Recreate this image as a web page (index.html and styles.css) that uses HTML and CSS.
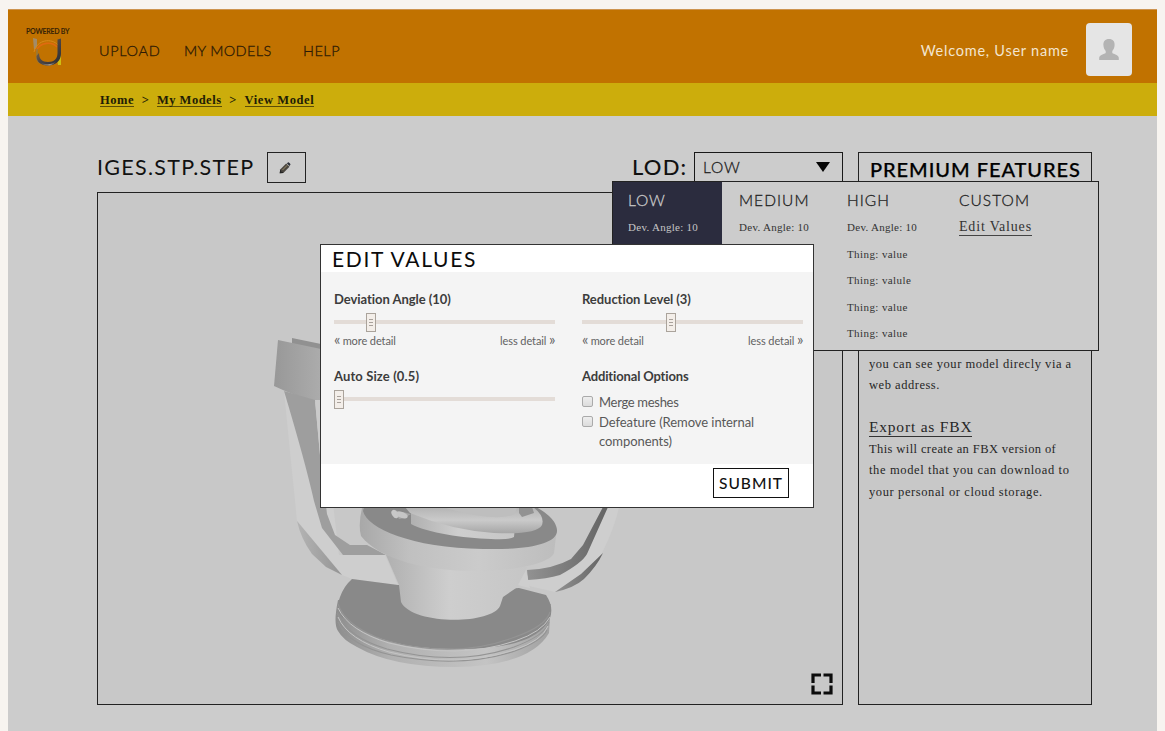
FILE: index.html
```html
<!DOCTYPE html>
<html lang="en">
<head>
<meta charset="utf-8">
<title>View Model</title>
<link rel="stylesheet" href="styles.css">
</head>
<body>
<div class="page">
  <header class="header">
    <div class="brand">
      <span class="brand-label">POWERED BY</span>
      <svg class="brand-logo" width="30" height="29" viewBox="0 0 30 29">
        <defs>
          <linearGradient id="steel" x1="0" y1="0" x2="1" y2="1"><stop offset="0" stop-color="#94734b"/><stop offset=".5" stop-color="#4c4545"/><stop offset="1" stop-color="#292b30"/></linearGradient>
          <linearGradient id="sweep" x1="0" y1="0" x2="1" y2="0"><stop offset="0" stop-color="#35353a"/><stop offset=".6" stop-color="#a09a92"/><stop offset="1" stop-color="#29292b"/></linearGradient>
        </defs>
        <path d="M0 0l4 1v8L1 12z" fill="#a28b69"/>
        <path d="M1 14C4 1 19 0 25 7" fill="none" stroke="#d98a1c" stroke-width="1"/>
        <path d="M3 13C7 4 19 3 24 9" fill="none" stroke="#e06a10" stroke-width="1.600"/>
        <path d="M24 22l4-5v10h-3z" fill="#cfbd12"/>
        <path d="M4 11v10q1 3 3 4" fill="none" stroke="#96793a" stroke-width="1.500"/>
        <path d="M24.500 1.500L28 .5v15c0 8-6 12-13 12S3.500 24 3.500 18L6 15c0 6 3 9 9 9s9.500-3 9.500-9z" fill="url(#steel)"/>
        <path d="M6 23c4 4.500 14 4.500 18-1-2 4-5 5.500-9 5.500S8 26 6 23z" fill="url(#sweep)"/>
      </svg>
    </div>
    <nav class="nav">
      <a class="nav-upload">UPLOAD</a><a class="nav-models">MY MODELS</a><a class="nav-help">HELP</a>
    </nav>
    <span class="welcome">Welcome, User name</span>
    <div class="avatar">
      <svg width="20" height="21" viewBox="0 0 20 21"><path d="M10 0c4 0 5.800 2.500 5.600 6.100-.1 2.500-1 4.600-2.300 5.800v2c1.500 1.100 6.300 1.800 6.500 4.800V21H.2v-2.300c.2-3 5-3.700 6.500-4.800v-2c-1.300-1.200-2.200-3.300-2.300-5.800C4.200 2.500 6 0 10 0z" fill="#b3b3b3"/></svg>
    </div>
  </header>
  <nav class="crumbs">
    <a>Home</a><span class="sep">&gt;</span><a class="c-models">My Models</a><span class="sep">&gt;</span><a class="c-view">View Model</a>
  </nav>
  <main class="main">
    <section class="model">
      <div class="model-head">
        <h1 class="model-name">IGES.STP.STEP</h1>
        <button class="edit" aria-label="Rename">
          <svg width="12" height="12" viewBox="0 0 12 12"><path d="M1.200 7.500L7.200 1.500l3.300 3.300L4.300 11 .7 11.300z" fill="#4b4740"/><path d="M7.800 1.200L9 .4c.6-.4 2.800 1.600 2.400 2.400l-.9 1.200z" fill="#2c2f38"/><path d="M3.500 8l4.800-4.800" stroke="#9a8b68" stroke-width="1"/><path d="M1.200 7.500l.8.9.3 1.300 1.600.4.400.9-3.600.3z" fill="#252525"/></svg>
        </button>
        <span class="lod-label">LOD:</span>
        <div class="lod-select"><span>LOW</span><svg width="14" height="10" viewBox="0 0 14 10"><path d="M0 0h14L7 10z" fill="#050505"/></svg></div>
      </div>
      <div class="viewer">
        <svg class="scene" viewBox="98 193 744 511">
          <defs>
            <linearGradient id="cone" x1="0" x2="1"><stop offset="0" stop-color="#b0b0b0"/><stop offset=".45" stop-color="#cecece"/><stop offset="1" stop-color="#c6c6c6"/></linearGradient>
            <linearGradient id="rim" x1="0" x2="1"><stop offset="0" stop-color="#a8a8a8"/><stop offset=".25" stop-color="#c0c0c0"/><stop offset=".6" stop-color="#cbcbcb"/><stop offset="1" stop-color="#bdbdbd"/></linearGradient>
            <linearGradient id="disc" x1="0" x2="1"><stop offset="0" stop-color="#8d8d8d"/><stop offset=".25" stop-color="#b0b0b0"/><stop offset=".7" stop-color="#c4c4c4"/><stop offset="1" stop-color="#a0a0a0"/></linearGradient>
            <linearGradient id="tube" x1="0" y1="0" x2="0" y2="1"><stop offset="0" stop-color="#b4b4b4"/><stop offset=".5" stop-color="#cacaca"/><stop offset="1" stop-color="#a6a6a6"/></linearGradient>
            <linearGradient id="block" x1="0" x2="1"><stop offset="0" stop-color="#989898"/><stop offset="1" stop-color="#acacac"/></linearGradient>
            <linearGradient id="shade" x1="0" x2="1"><stop offset="0" stop-color="#b4b4b4"/><stop offset="1" stop-color="#949494"/></linearGradient>
            <linearGradient id="dark" x1="0" x2="1"><stop offset="0" stop-color="#929292"/><stop offset="1" stop-color="#646464"/></linearGradient>
          </defs>
          <path d="M284 391l13 130 45 54 10 4 46 6-13-30h-46l-18-155z" fill="#cecece"/>
          <path d="M292 338l29 6v8h-29z" fill="#919191"/>
          <path d="M278 340l43 9v55q-28-9-47-18z" fill="url(#block)"/>
          <path d="M284 391l31 9 6 66 6 48 8 21 15 10h17l19 10h-43l-21-27-8-27q-9-40-30-110z" fill="#9e9e9e"/>
          <path d="M315 400h6v66z" fill="#cacaca"/>
          <path d="M297 521l45 54-16-8-14-13q-11-15-15-33z" fill="url(#shade)"/>
          <path d="M607 507l-22 47-19 14-38 5-3 12 30 7q35-17 47-39 13-26 17-46z" fill="#cecece"/>
          <path d="M603 507h5l-21 47q-5 9-27 21-13 4-32 5l-1-10q26-1 44-11l12-14z" fill="url(#dark)"/>
          <path d="M603 553q-6 13-19 26-10 9-29 13l26-18z" fill="url(#dark)"/>
          <path d="M338 600q-5 24 0 31 5 9 19 16 35 20 98 20 75-1 94-34l2-29z" fill="url(#disc)"/>
          <path d="M352 579l46 6 105 4 16-1 27 7q8 12 4 23-14 32-95 31-76 0-113-32-7-8-2-20 4-11 12-18z" fill="#898989"/>
          <path d="M338 604q7 22 46 36 71 20 131-3 31-11 35-25M337 613q10 24 50 36 69 18 127-2 32-12 35-25M338 622q10 23 53 33 69 14 124-4 27-10 32-21" fill="none" stroke="#949494" stroke-width="1.100"/>
          <path d="M338 608q11 23 51 35 69 17 126-2 27-9 35-24M338 617q10 23 51 35 68 17 125-2 28-9 34-24" fill="none" stroke="#c5c5c5" stroke-width="1"/>
          <path d="M386 555l141 12-5 17-19 13-3 9c-9 19-88 19-99-4l-2-17z" fill="url(#cone)"/>
          <path d="M526 570l4 18-12-3z" fill="#cecece"/>
          <path d="M362 508q-4 17-1 28c18 23 64 35 114 35 42 0 75-8 79-18l3-25z" fill="url(#rim)"/>
          <path d="M364 507h172q20 11 21 23c1 14-30 20-74 19-72-1-116-21-120-38z" fill="#898989"/>
          <path d="M411 507h106l-3 30q-4 3-23 2c-28-1-63-6-80-15z" fill="url(#cone)"/>
          <path d="M405 507h128q12 9 9 18-5 10-48 8-43-3-84-20z" fill="url(#tube)"/>
          <path d="M442 507h75l-2 7q-18 9-73-7z" fill="#bebebe"/>
          <path d="M519 507h13l2 6-12 4-3-4z" fill="#929292"/>
          <path d="M394 510q13 3 17 4l-7 4-5 1z" fill="#a6a6a6"/>
          <ellipse cx="395" cy="514" rx="3" ry="4.500" transform="rotate(-35 395 514)" fill="#c8c8c8"/>
          <ellipse cx="402" cy="515" rx="6" ry="3" transform="rotate(20 402 515)" fill="#c6c6c6"/>
        </svg>
        <svg class="expand" width="22" height="22" viewBox="0 0 22 22"><path d="M10 2H2V10M12.500 2H20V10M10 20H2V12.500M12.500 20H20V12.500" fill="none" stroke="#0c0c0c" stroke-width="3.200"/></svg>
      </div>
    </section>
    <aside class="premium">
      <h2>PREMIUM FEATURES</h2>
      <div class="premium-body">
        <p>you can see your model direcly via a<br>web address.</p>
        <a class="export">Export as FBX</a>
        <p class="desc"><span class="d1">This will create an FBX version of</span><br><span class="d2">the model that you can download to</span><br><span class="d3">your personal or cloud storage.</span></p>
      </div>
    </aside>
  </main>

  <div class="lod-menu">
    <div class="lod-col active"><h3>LOW</h3><p>Dev. Angle: 10</p></div>
    <div class="lod-col"><h3>MEDIUM</h3><p>Dev. Angle: 10</p></div>
    <div class="lod-col high"><h3>HIGH</h3><p>Dev. Angle: 10</p><p>Thing: value</p><p>Thing: valule</p><p>Thing: value</p><p>Thing: value</p></div>
    <div class="lod-col custom"><h3>CUSTOM</h3><a>Edit Values</a></div>
  </div>

  <div class="modal">
    <h2 class="modal-title">EDIT VALUES</h2>
    <div class="modal-body">
      <div class="field">
        <label>Deviation Angle (10)</label>
        <div class="slider"><span class="knob" style="left:32px"></span></div>
        <div class="range"><span><b>«</b> more detail</span><span>less detail <b>»</b></span></div>
      </div>
      <div class="field">
        <label>Reduction Level (3)</label>
        <div class="slider"><span class="knob" style="left:84px"></span></div>
        <div class="range"><span><b>«</b> more detail</span><span>less detail <b>»</b></span></div>
      </div>
      <div class="field">
        <label class="auto">Auto Size (0.5)</label>
        <div class="slider"><span class="knob" style="left:0"></span></div>
      </div>
      <div class="field options">
        <label class="additional">Additional Options</label>
        <div class="option first"><i class="box"></i><span>Merge meshes</span></div>
        <div class="option"><i class="box"></i><span>Defeature (Remove internal<br>components)</span></div>
      </div>
    </div>
    <div class="modal-foot"><button class="submit">SUBMIT</button></div>
  </div>
</div>
</body>
</html>
```
FILE: styles.css
```css
* { box-sizing: border-box; }
body { margin: 0; background: #f7f4f0; font-family: Lato, "Open Sans", sans-serif; color: #111; }
h1, h2, h3, p { margin: 0; font-weight: 400; }
button { padding: 0; background: none; font-family: inherit; color: inherit; }
.page { position: relative; width: 1149px; height: 722px; margin: 9px 8px 0; background: #ccc; overflow: hidden; }

.header { display: flex; align-items: center; height: 74px; padding: 0 25px 0 17px; background: #c17200; border-top: 1px solid #cd9450; }
.brand { display: flex; flex-direction: column; width: 74px; align-self: flex-start; padding-top: 17px; }
.brand-label { font: 700 7px/9px Lato, sans-serif; letter-spacing: -.25px; color: #382306; padding-left: 1px; white-space: nowrap; }
.brand-logo { margin: 2px 0 0 8px; }
.nav { display: flex; font-size: 14.500px; font-weight: 300; line-height: 20px; color: #2c1a05; padding-top: 8px; -webkit-text-stroke: .3px #2c1a05; }
.nav a { white-space: nowrap; }
.nav-upload { width: 85px; letter-spacing: .65px; }
.nav-models { width: 119px; letter-spacing: .35px; }
.nav-help { letter-spacing: .5px; }
.welcome { margin-left: auto; padding-top: 8px; margin-right: 17px; color: #f3e5cf; font-size: 14.500px; line-height: 20px; letter-spacing: .76px; }
.avatar { display: flex; align-items: center; justify-content: center; width: 46px; height: 53px; margin-top: 6px; border-radius: 4px; background: #e5e5e5; }

.crumbs { display: flex; height: 33px; padding: 9px 0 0 92px; background: #ccad0c; font: 700 12.500px/16px "Liberation Serif", serif; letter-spacing: .5px; color: #211c05; }
.crumbs a { height: 15px; border-bottom: 1px solid #5a4c08; white-space: nowrap; }
.crumbs .c-view { letter-spacing: .6px; }
.crumbs .sep { width: 23px; text-align: center; }

.main { display: flex; gap: 15px; padding: 36px 0 0 89px; }
.model { width: 746px; }
.model-head { display: flex; height: 40px; align-items: flex-start; }
.model-name { width: 170px; font-size: 21.500px; line-height: 31px; letter-spacing: 1.280px; white-space: nowrap; }
.edit { display: flex; align-items: center; justify-content: center; width: 39px; height: 31px; border: 1px solid #222; padding-right: 4px; }
.lod-label { margin-left: auto; width: 62px; font-size: 22px; line-height: 30px; letter-spacing: 1.200px; font-weight: 500; }
.lod-select { display: flex; align-items: center; justify-content: space-between; width: 149px; height: 31px; border: 1px solid #181818; padding: 0 12px 1px 8px; font-size: 15.500px; font-weight: 300; color: #1c1c1c; letter-spacing: .8px; -webkit-text-stroke: .3px #1c1c1c; }
.viewer { position: relative; height: 513px; border: 1px solid #222; background: #c8c8c8; }
.scene { display: block; width: 744px; height: 511px; }
.expand { position: absolute; right: 9px; bottom: 9px; }
.premium { width: 234px; height: 553px; border: 1px solid #222; background: #c8c8c8; }
.premium h2 { height: 30px; padding-left: 11px; background: #ccc; font-size: 20px; line-height: 32px; letter-spacing: .95px; font-weight: 500; color: #000; white-space: nowrap; -webkit-text-stroke: .25px #000; }
.premium-body { padding: 171px 0 0 10px; font: 12.500px/21px "Liberation Serif", serif; letter-spacing: .53px; color: #262626; white-space: nowrap; }
.export { display: inline-block; height: 19px; margin: 22px 0 2px; border-bottom: 1px solid #333; font-size: 15.500px; line-height: 17px; letter-spacing: .8px; vertical-align: top; }
.desc { line-height: 21.300px; }
.d1 { letter-spacing: .4px; }
.d2 { letter-spacing: .63px; }
.d3 { letter-spacing: .6px; }

.lod-menu { position: absolute; left: 604px; top: 172px; width: 487px; height: 170px; display: grid; grid-template-columns: 109px 109px 113px 1fr; border: 1px solid #222; background: #ccc; }
.lod-col { padding: 8px 0 0 17px; font: 11px/15px "Liberation Serif", serif; letter-spacing: .28px; color: #333; white-space: nowrap; }
.lod-col.high { padding-left: 16px; }
.lod-col.custom { padding-left: 15px; }
.lod-col.active { padding-left: 15px; background: #2b2c3e; color: #c6c6c6; }
.lod-col h3 { font: 300 15.500px/20px Lato, sans-serif; letter-spacing: 1.050px; margin-bottom: 10px; color: #222; -webkit-text-stroke: .3px #222; }
.lod-col.active h3 { color: #c8c8c8; letter-spacing: .8px; -webkit-text-stroke: .3px #c8c8c8; }
.lod-col p { margin-bottom: 11.500px; }
.lod-col p + p { letter-spacing: .4px; }
.lod-col a { display: inline-block; height: 18px; margin-top: -4px; border-bottom: 1px solid #444; font-size: 14px; line-height: 17px; letter-spacing: .82px; }

.modal { position: absolute; left: 312px; top: 235px; width: 494px; height: 264px; border: 1px solid #333; background: #fff; }
.modal-title { height: 27px; padding-left: 11px; font-size: 21px; line-height: 27px; letter-spacing: 1.650px; color: #0b0b0b; }
.modal-body { display: grid; grid-template-columns: 221px 221px; grid-template-rows: 77px 1fr; column-gap: 27px; height: 192px; padding: 18px 13px 0; background: #f4f4f4; color: #444; }
.field label { display: block; font-size: 13px; line-height: 19px; font-weight: 700; letter-spacing: -.05px; color: #3c3c3c; }
.field .auto { letter-spacing: .12px; }
.field .additional { letter-spacing: -.15px; }
.slider { position: relative; height: 4px; margin-top: 11px; background: #e3dcd7; }
.knob { position: absolute; top: -7px; width: 10px; height: 19px; border: 1px solid #aaa39b; background: linear-gradient(#a8a19b, #a8a19b) 2px 5px/4px 1px no-repeat, linear-gradient(#a8a19b, #a8a19b) 2px 8px/4px 1px no-repeat, linear-gradient(#a8a19b, #a8a19b) 2px 11px/4px 1px no-repeat, #f3eee9; }
.range { display: flex; justify-content: space-between; margin-top: 9px; font-size: 11px; line-height: 16px; letter-spacing: -.1px; color: #626262; }
.range b { font-size: 15px; line-height: 12px; font-weight: 400; letter-spacing: -.5px; }
.option { display: flex; font-size: 13px; line-height: 19.500px; letter-spacing: -.06px; color: #585858; white-space: nowrap; }
.option.first { margin-top: 7px; letter-spacing: -.3px; }
.box { width: 11px; height: 11px; margin: 3px 6px 0 0; border: 1px solid #aaa; border-radius: 2px; background: linear-gradient(#eee, #dcdcdc); }
.modal-foot { display: flex; justify-content: flex-end; padding: 4px 24px 0 0; }
.submit { width: 76px; height: 30px; border: 1px solid #111; font-size: 15.500px; letter-spacing: 1px; font-weight: 500; }
```
